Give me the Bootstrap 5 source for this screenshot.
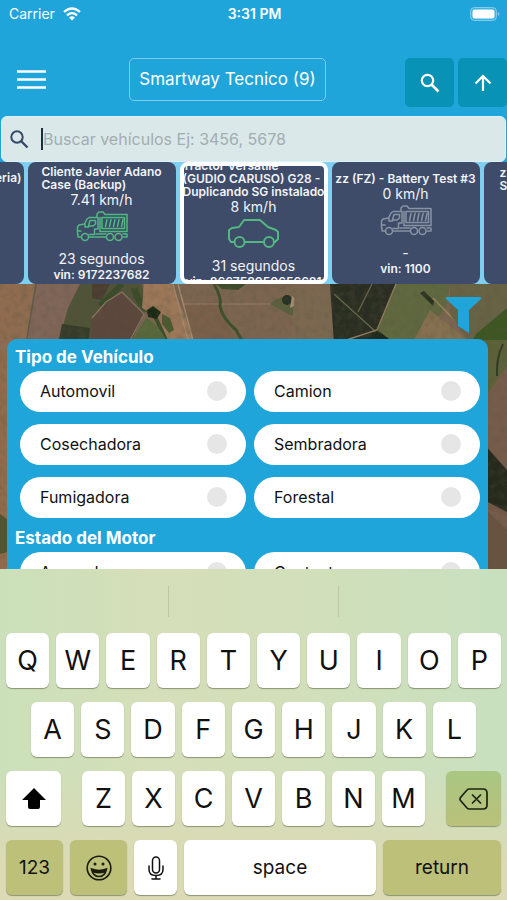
<!DOCTYPE html>
<html lang="es">
<head>
<meta charset="utf-8">
<meta name="viewport" content="width=device-width, initial-scale=1">
<title>Smartway Tecnico</title>
<link href="https://cdn.jsdelivr.net/npm/bootstrap@5.3.0/dist/css/bootstrap.min.css" rel="stylesheet">
<style>
  body { font-family: Inter, "Liberation Sans", sans-serif; color: #111; background: #20a5da; }
  .brand-bg { background: #20a5da; }
  svg { display: block; }
  button { font-family: inherit; }
  .status { height: 27px; font-size: 14px; padding: 0 7px 0 9px; }
  .status > * { flex: 1 1 0; }
  .topbar { padding: 31px 0 9px 17px; }
  .menu { height: 43px; }
  .team { height: 43px; font-size: 17px; color: #fff; border: 1px solid #7ccbea; border-radius: 5px; padding: 0 9px; background: none; }
  .tool { width: 49px; height: 49px; background: #0892b6; border: 0; border-radius: 5px; }
  .plain { background: none; border: 0; padding: 0; }
  .search { height: 46px; margin: 0 1px; background: #dae8ea; border: 1px solid #d9f3fb; border-radius: 6px; padding: 0 8px; }
  .caret { width: 2px; height: 22px; background: #1d2b3a; margin-left: 12px; }
  .search input { border: 0; background: none; outline: 0; padding: 0; font-size: 16px; min-width: 0; }
  .search input::placeholder { color: #a3adb0; opacity: 1; }
  .strip { height: 122px; gap: 4px; background: #7fcff0; overflow: hidden; }
  .unit { flex: 0 0 148px; height: 122px; background: #3e4b69; color: #f1f4f8; border-radius: 8px; overflow: hidden; }
  .unit.chosen { border: 4px solid #fff; }
  .unit > * { flex-shrink: 0; }
  .unit-name { font-size: 12px; line-height: 13px; font-weight: 600; white-space: nowrap; }
  .unit-line { font-size: 14px; line-height: 18px; }
  .unit-vin { font-size: 12px; line-height: 13px; font-weight: 600; }
  .unit svg { margin: 1px 0 8px; }
  .edge-left { padding: 9px 2px; }
  .c-green { color: #52b881; }
  .c-grey { color: #8793a3; }
  .map { flex: 1 1 0; min-height: 0; overflow: hidden; background: #77644f; }
  .map-art { z-index: 0; }
  .map-ui { padding: 12px 19px 0 7px; z-index: 1; }
  .funnel { margin-right: 6px; }
  .filters { border-radius: 10px 10px 0 0; padding: 6px 8px 20px; margin-top: 5px; }
  .filters h2 { font-size: 17px; line-height: 24px; font-weight: 700; color: #fff; margin: 0 0 2px; }
  .filters fieldset { margin-bottom: 8px; }
  .choices { row-gap: 12px; column-gap: 8px; display: grid; grid-template-columns: 1fr 1fr; padding-left: 5px; }
  .choice { height: 41px; border-radius: 21px; background: #fff; padding: 0 19px 1px 20px; font-size: 16px; }
  .choice input { appearance: none; width: 20px; height: 20px; border-radius: 50%; background: #e6e6e6; margin: 0; }
  .choice input:checked { background: #20a5da; }
  .keyboard { background: linear-gradient(180deg, rgba(219,218,180,.0) 60%, #dbdab4 90%), linear-gradient(90deg, #cbe0ba, #d5dfb9 30%, #d2dfba 60%, #c8e0bf); padding-bottom: 4px; }
  .hints { height: 64px; }
  .hints span { flex: 1; height: 31px; }
  .hints span + span { border-left: 1px solid #bdc5a3; }
  .keys { gap: 13px; padding: 0 6px; }
  .keys > div { gap: 7px; }
  .inset { padding: 0 25px; }
  .letters { flex: 1; gap: 7px; margin: 0 14px; }
  .key { height: 55px; flex: 1 1 0; min-width: 0; border: 0; padding: 0; border-radius: 6px; background: #fff; color: #111; font-size: 27px; line-height: 55px; box-shadow: 0 1px 1px #8b9475; margin-bottom: 1px; }
  .key.side { flex: 0 0 55px; }
  .key.base { flex: 0 0 57px; }
  .key.mic { flex: 0 0 43px; }
  .key.word { font-size: 19px; }
  .key.ret { flex: 0 0 118px; }
  .key.olive { background: #bcc078; }
  .key.del { background: linear-gradient(#a9c783, #bac17a); }
</style>
<script src="https://cdn.jsdelivr.net/npm/bootstrap@5.3.0/dist/js/bootstrap.bundle.min.js"></script>
</head>
<body>
<svg width="0" height="0" class="position-absolute" aria-hidden="true">
  <symbol id="truck" viewBox="0 0 52 32">
    <g fill="none" stroke="currentColor" stroke-width="1.500" stroke-linejoin="round" stroke-linecap="round">
      <path d="M5.500 27H2V24H1.500V17L3 15L8.500 14L11 9L13 7.500H21V4L23 2H27L29 4.500H51V21.500H24"/>
      <path d="M12.500 16L14 10.500H19.500V14L17 16ZM9 14.500V17H12.500M22 7.500V19H18.500V24.500H13M2 21H5M24 7.500V21.500M26 7.500H48.500V18.500H26Z"/>
      <path d="M31 9.500L29.500 16.500M35 9.500L33.500 16.500M39 9.500L37.500 16.500M43 9.500L41.500 16.500M47 9.500L45.500 16.500"/>
      <path d="M13 27H30M20 24H30M47 27H51V24H47"/>
      <circle cx="9" cy="27" r="3.500"/><circle cx="34" cy="27" r="3.500"/><circle cx="42.500" cy="27" r="3.500"/>
    </g>
  </symbol>
</svg>

<div class="vh-100 d-flex flex-column overflow-hidden">
  <header class="brand-bg">
    <div class="status d-flex align-items-center text-white">
      <div class="d-flex align-items-center gap-2"><span>Carrier</span>
        <svg width="18" height="14" viewBox="0 0 18 14" fill="none" stroke="#fff" stroke-width="2.300"><path d="M1 5Q9-2 17 5M4 8.300Q9 4 14 8.300"/><path d="M9 13.500L6 10.500Q9 8 12 10.500Z" fill="#fff" stroke="none"/></svg>
      </div>
      <div class="text-center fw-semibold">3:31 PM</div>
      <div class="d-flex justify-content-end">
        <svg width="30" height="14" viewBox="0 0 30 14"><rect x=".5" y=".5" width="26" height="13" rx="4" fill="#42b2df" stroke="#82cdea"/><rect x="2.500" y="2.500" width="22" height="9" rx="2.500" fill="#fff"/><path d="M28 5q3 2 0 4z" fill="#82cdea"/></svg>
      </div>
    </div>
    <div class="topbar d-flex align-items-start justify-content-between">
      <button class="plain menu" aria-label="Menú"><svg width="29" height="19" viewBox="0 0 29 19" stroke="#fff" stroke-width="2.600"><path d="M0 1.500H29M0 9.500H29M0 17.500H29"/></svg></button>
      <button class="team ms-1">Smartway Tecnico (9)</button>
      <div class="d-flex gap-1">
        <button class="tool d-flex align-items-center justify-content-center" aria-label="Buscar"><svg width="20" height="20" viewBox="0 0 20 20" fill="none" stroke="#fff" stroke-width="2.200"><circle cx="7.500" cy="7.500" r="5.700"/><path d="M11.500 11.500L18.500 18.500" stroke-width="2.600"/></svg></button>
        <button class="tool d-flex align-items-center justify-content-center" aria-label="Subir"><svg width="18" height="18" viewBox="0 0 18 18" fill="none" stroke="#fff" stroke-width="2.200"><path d="M9 17V2M1.500 9.500L9 2l7.500 7.500"/></svg></button>
      </div>
    </div>
  </header>

  <div class="search d-flex align-items-center">
    <svg width="19" height="19" viewBox="0 0 19 19" fill="none" stroke="#35496a" stroke-width="2"><circle cx="7" cy="7" r="5.700"/><path d="M11 11L17.500 17.500" stroke-width="2.400"/></svg>
    <span class="caret"></span>
    <input class="flex-fill" type="text" aria-label="Buscar vehículos" placeholder="Buscar vehículos Ej: 3456, 5678">
  </div>

  <div class="strip d-flex justify-content-center">
    <div class="unit edge-left d-flex flex-column align-items-end"><div class="unit-name">eria)</div></div>
    <div class="unit d-flex flex-column align-items-center justify-content-center">
      <div class="unit-name">Cliente Javier Adano<br>Case (Backup)</div>
      <div class="unit-line">7.41 km/h</div>
      <svg class="c-green" width="52" height="32"><use href="#truck"/></svg>
      <div class="unit-line">23 segundos</div>
      <div class="unit-vin">vin: 9172237682</div>
    </div>
    <div class="unit chosen d-flex flex-column align-items-center justify-content-center">
      <div class="unit-name">Tractor Versatile<br>(GUDIO CARUSO) G28 -<br>Duplicando SG instalado</div>
      <div class="unit-line">8 km/h</div>
      <svg class="c-green" width="54" height="32" viewBox="0 0 54 32" fill="none" stroke="currentColor" stroke-width="2" stroke-linejoin="round"><path d="M7 25H4l-2-3v-9l3-2 7-1 5-7h16l8 7 8 3 2 2v7l-3 3h-1M18 25h19"/><circle cx="12.500" cy="25" r="5"/><circle cx="42" cy="25" r="5"/></svg>
      <div class="unit-line">31 segundos</div>
      <div class="unit-vin">vin: 866758050656681</div>
    </div>
    <div class="unit d-flex flex-column align-items-center justify-content-center">
      <div class="unit-name">zz (FZ) - Battery Test #3</div>
      <div class="unit-line">0 km/h</div>
      <svg class="c-grey" width="52" height="32"><use href="#truck"/></svg>
      <div class="unit-line">-</div>
      <div class="unit-vin">vin: 1100</div>
    </div>
    <div class="unit px-3 py-1"><div class="unit-name">zz<br>S</div></div>
  </div>

  <main class="map position-relative">
    <svg class="map-art position-absolute top-0 start-0 w-100 h-100" viewBox="0 0 507 285" preserveAspectRatio="xMidYMin slice" aria-hidden="true">
      <defs>
        <filter id="grain" x="0" y="0" width="100%" height="100%"><feTurbulence type="fractalNoise" baseFrequency=".14" numOctaves="4" seed="4"/><feColorMatrix values="0 0 0 0 .1  0 0 0 0 .09  0 0 0 0 .05  1.800 0 0 0 -.72"/></filter>
        <filter id="soft"><feGaussianBlur stdDeviation=".6"/></filter>
      </defs>
      <rect width="507" height="285" fill="#7b6550"/>
      <g filter="url(#soft)">
        <path d="M0 0H36L28 60 10 285H0z" fill="#8f6c50"/>
        <path d="M36 0H82L58 60H26z" fill="#806659"/>
        <path d="M80 0H142L146 26 130 60H58L68 24z" fill="#4f5338"/>
        <path d="M92 34L106 18 122 8 144 30 128 60H90z" fill="#5b473e"/>
        <path d="M92 0H110L102 16 92 14z" fill="#4b3c32"/>
        <path d="M62 40L90 44 88 60H58z" fill="#363c2a"/>
        <path d="M100 22Q112 10 122 0" stroke="#384c2c" stroke-width="6" fill="none"/>
        <path d="M134 4Q138 20 152 28Q160 34 166 56" stroke="#3a4c2a" stroke-width="7" fill="none"/>
        <path d="M144 0H172L194 56H168L158 34 142 24z" fill="#9c7759"/>
        <path d="M146 34Q158 38 168 60H130z" fill="#59693a"/>
        <path d="M147 26l6-4 8 6-4 7-9-2z" fill="#1f2b18"/>
        <path d="M162 30l8 4 4 12-5 3-7-9z" fill="#4b5a32"/>
        <path d="M122 8L144 30L128 60M92 34L106 18L122 8" stroke="#8d7460" stroke-width="1.200" fill="none"/>
        <path d="M36 0L26 60" stroke="#5d5a4c" stroke-width="1.500"/>
        <path d="M184 20L216 18 238 60H194z" fill="#7a604b"/>
        <path d="M178 0L194 60M173 0L189 60" stroke="#a58c72" stroke-width="1.300" fill="none"/>
        <path d="M184 20H294" stroke="#967e64" stroke-width="1"/>
        <path d="M214 0Q222 14 220 22Q222 34 236 46L244 60" stroke="#3e502b" stroke-width="3" fill="none"/>
        <path d="M216 0H246L238 6 222 5z" fill="#3d4c2a"/>
        <path d="M270 20Q284 6 302 18L292 32Z" fill="#5c613f"/><circle cx="287" cy="16" r="5" fill="#263120"/><path d="M292 12l4 3-2 7-4 2z" fill="#aa9277"/>
        <path d="M302 10L292 50" stroke="#92735c" stroke-width="1.500"/>
        <path d="M296 0H330L334 60H290z" fill="#7c6751"/>
        <path d="M330 0H396L378 46 362 60H334z" fill="#292e20"/>
        <path d="M372 0L358 28M334 10L376 48" stroke="#6c684d" stroke-width="1.200"/>
        <path d="M396 0H450L446 24 414 60H362L378 46z" fill="#61683f"/>
        <path d="M362 60L377 46 396 60z" fill="#20291b"/>
        <path d="M396 0L377 46 334 60" stroke="#917b5e" stroke-width="1.500" fill="none"/>
        <path d="M430 26L462 52 470 60H412z" fill="#85704f"/>
        <path d="M420 9l4-2 10 10-1 5z" fill="#2c3020"/>
        <path d="M433 14L468 50" stroke="#9b845f" stroke-width="1.500"/>
        <path d="M450 0H507V34L490 60H470L450 30z" fill="#686344"/>
        <path d="M476 50L507 24V60H470z" fill="#3d5723"/>
        <path d="M484 56H507V94L486 110z" fill="#5c6238"/>
        <path d="M503 60Q496 74 497 92" stroke="#303923" stroke-width="2" fill="none"/>
        <path d="M507 82L484 114V285H507z" fill="#765c4b"/>
        <path d="M484 190L507 212V232L484 224z" fill="#71594a"/>
        <path d="M484 160L507 186V228L484 216z" fill="#27291d"/>
        <path d="M484 224L507 246V285H484z" fill="#69533f"/>
        <path d="M0 230L8 236V268L0 270z" fill="#4d5634"/>
      </g>
      <rect width="507" height="285" filter="url(#grain)" opacity=".35"/>
    </svg>
    <div class="map-ui position-relative">
      <div class="d-flex justify-content-end">
        <button class="plain funnel" aria-label="Filtros"><svg width="37" height="38" viewBox="0 0 37 38" fill="#20a5da"><path d="M2 1H35Q37 1 36 3L24 14V37L13 30V14L1 3Q0 1 2 1Z"/></svg></button>
      </div>
      <form class="filters brand-bg">
        <fieldset>
          <h2>Tipo de Vehículo</h2>
          <div class="choices">
            <label class="choice d-flex align-items-center justify-content-between">Automovil<input type="checkbox"></label>
            <label class="choice d-flex align-items-center justify-content-between">Camion<input type="checkbox"></label>
            <label class="choice d-flex align-items-center justify-content-between">Cosechadora<input type="checkbox"></label>
            <label class="choice d-flex align-items-center justify-content-between">Sembradora<input type="checkbox"></label>
            <label class="choice d-flex align-items-center justify-content-between">Fumigadora<input type="checkbox"></label>
            <label class="choice d-flex align-items-center justify-content-between">Forestal<input type="checkbox"></label>
          </div>
        </fieldset>
        <fieldset>
          <h2>Estado del Motor</h2>
          <div class="choices">
            <label class="choice d-flex align-items-center justify-content-between">Apagado<input type="checkbox"></label>
            <label class="choice d-flex align-items-center justify-content-between">Contacto<input type="checkbox"></label>
          </div>
        </fieldset>
      </form>
    </div>
  </main>

  <section class="keyboard" aria-label="Teclado">
    <div class="hints d-flex align-items-center"><span></span><span></span><span></span></div>
    <div class="keys d-flex flex-column">
      <div class="d-flex"><button class="key">Q</button><button class="key">W</button><button class="key">E</button><button class="key">R</button><button class="key">T</button><button class="key">Y</button><button class="key">U</button><button class="key">I</button><button class="key">O</button><button class="key">P</button></div>
      <div class="d-flex inset"><button class="key">A</button><button class="key">S</button><button class="key">D</button><button class="key">F</button><button class="key">G</button><button class="key">H</button><button class="key">J</button><button class="key">K</button><button class="key">L</button></div>
      <div class="d-flex">
        <button class="key side d-flex align-items-center justify-content-center" aria-label="Mayúsculas"><svg width="24" height="21" viewBox="0 0 24 21"><path d="M12 0L24 12H18V19Q18 21 16 21H8Q6 21 6 19V12H0Z"/></svg></button>
        <div class="letters d-flex"><button class="key">Z</button><button class="key">X</button><button class="key">C</button><button class="key">V</button><button class="key">B</button><button class="key">N</button><button class="key">M</button></div>
        <button class="key side del d-flex align-items-center justify-content-center" aria-label="Borrar"><svg width="29" height="22" viewBox="0 0 29 22" fill="none" stroke="#1b2412" stroke-width="1.700" stroke-linejoin="round" stroke-linecap="round"><path d="M10 1H24Q28 1 28 5V17Q28 21 24 21H10Q9 21 8 20L1.500 12.500Q.5 11 1.500 9.500L8 2Q9 1 10 1ZM13.500 7L21.500 15M21.500 7L13.500 15"/></svg></button>
      </div>
      <div class="d-flex">
        <button class="key base olive word">123</button>
        <button class="key base olive d-flex align-items-center justify-content-center" aria-label="Emoji"><svg width="26" height="26" viewBox="0 0 26 26" fill="none" stroke="#1b1c0c" stroke-width="1.600"><circle cx="13" cy="13" r="11.800"/><circle cx="9" cy="9" r="1.500" fill="#1b1c0c" stroke="none"/><circle cx="17" cy="9" r="1.500" fill="#1b1c0c" stroke="none"/><path d="M5.500 14Q13 17 20.500 14Q19 21.500 13 21.500T5.500 14Z"/><path d="M6 14.500Q13 17 20 14.500L19 17.500Q13 19.500 7 17.500Z" fill="#1b1c0c" stroke="none"/></svg></button>
        <button class="key mic d-flex align-items-center justify-content-center" aria-label="Dictado"><svg width="16" height="24" viewBox="0 0 16 24" fill="none" stroke="#111" stroke-width="1.500" stroke-linecap="round"><rect x="4.500" y="1" width="7" height="16" rx="3.500"/><path d="M1 10v3.500Q1 19.500 8 19.500T15 13.500V10M8 19.500V23M4 23H12"/></svg></button>
        <button class="key word">space</button>
        <button class="key ret olive word">return</button>
      </div>
    </div>
  </section>
</div>
</body>
</html>
